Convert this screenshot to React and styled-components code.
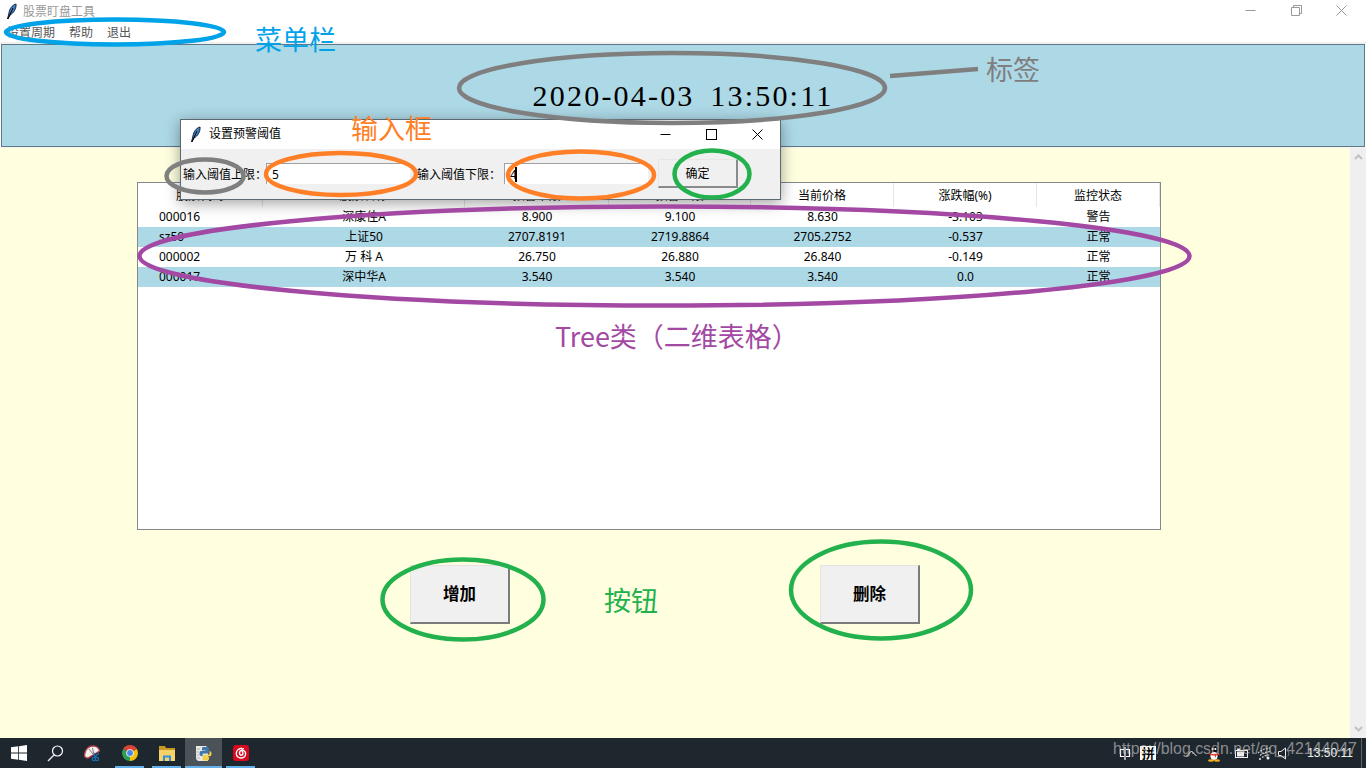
import styled, { createGlobalStyle } from 'styled-components';

const UI_FONT = `"Noto Sans", "Noto Sans CJK SC", sans-serif`;

const GlobalStyle = createGlobalStyle`
  html, body {
    margin: 0;
    padding: 0;
    overflow: hidden;
    background: #fff;
  }
  * {
    box-sizing: border-box;
  }
`;

const Page = styled.div`
  position: relative;
  width: 1366px;
  height: 768px;
  overflow: hidden;
  display: flex;
  flex-direction: column;
  font-family: ${UI_FONT};
  font-size: 12px;
  color: #000;
`;

const TitleBar = styled.div`
  height: 22px;
  flex: none;
  display: flex;
  align-items: center;
  padding: 1px 0 0 6px;
  background: #fff;
  color: ${(p) => (p.$active ? '#000' : '#9a9a9a')};
`;

const TitleText = styled.span`
  margin-left: ${(p) => p.$gap}px;
  line-height: 20px;
`;

const WindowButtons = styled.div`
  margin-left: auto;
  margin-top: ${(p) => p.$lift || 0}px;
  margin-right: ${(p) => p.$inset || 0}px;
  display: flex;
  color: ${(p) => p.$color};
`;

const WindowButton = styled.div`
  width: ${(p) => p.$w}px;
  display: flex;
  justify-content: center;
`;

const MenuBar = styled.div`
  height: 20px;
  flex: none;
  display: flex;
  gap: 14px;
  align-items: center;
  padding-left: 7px;
  background: #fff;
  color: #555;
`;

const MenuGap = styled.div`
  height: 2px;
  flex: none;
  background: #f0f0f0;
`;

const Band = styled.div`
  height: 103px;
  flex: none;
  margin: 0 1px;
  display: flex;
  align-items: center;
  justify-content: center;
  background: #add8e6;
  border: 1px solid #5f7a84;
  font-family: "Liberation Serif", serif;
  font-size: 30px;
  letter-spacing: 2.2px;
  word-spacing: 6px;
`;

const BandEdge = styled.div`
  height: 1px;
  flex: none;
  background: #f4f4f4;
`;

const Main = styled.div`
  flex: 1;
  min-height: 0;
  display: flex;
  background: #ffffe0;
`;

const Content = styled.div`
  flex: 1;
  padding: 34px 0 0 137px;
`;

const Tree = styled.div`
  width: 1024px;
  height: 348px;
  background: #fff;
  border: 1px solid #828790;
`;

const TreeRow = styled.div`
  display: grid;
  grid-template-columns: 125px 202px 144px 142px 143px 143px 1fr;
  height: ${(p) => (p.$head ? 24 : 20)}px;
  align-items: center;
  background: ${(p) => (p.$shaded ? '#add8e6' : '#fff')};
`;

const HeadCell = styled.div`
  height: 100%;
  display: flex;
  align-items: center;
  justify-content: center;
  border-right: 1px solid #e5e5e5;
`;

const Cell = styled.div`
  text-align: ${(p) => (p.$left ? 'left' : 'center')};
  padding-left: ${(p) => (p.$left ? 21 : 0)}px;
  line-height: 20px;
  white-space: nowrap;
`;

const Actions = styled.div`
  display: flex;
  gap: 310px;
  padding: 35px 0 0 273px;
`;

const BigButton = styled.button`
  width: 100px;
  height: 59px;
  padding: 0 0 2px;
  background: #f0f0f0;
  border: 0 solid #e3e3e3;
  border-width: 1px 2px 2px 1px;
  border-right-color: #7c7c7c;
  border-bottom-color: #7c7c7c;
  font-family: "Noto Sans CJK SC", sans-serif;
  font-size: 16.5px;
  font-weight: 700;
  color: #000;
`;

const Scrollbar = styled.div`
  width: 16px;
  flex: none;
  display: flex;
  flex-direction: column;
  justify-content: space-between;
  align-items: center;
  padding: 6px 0;
  background: #efefef;
  color: #c2c2c2;
`;

const Taskbar = styled.div`
  height: 30px;
  flex: none;
  display: flex;
  align-items: stretch;
  background: #1f272e;
  color: #fff;
`;

const TaskCell = styled.div`
  position: relative;
  width: 37px;
  display: flex;
  align-items: center;
  justify-content: center;
  background: ${(p) => (p.$active ? '#4b5258' : 'transparent')};

  &::after {
    content: '';
    position: absolute;
    left: ${(p) => (p.$active ? 0 : 4)}px;
    right: ${(p) => (p.$active ? 0 : 4)}px;
    bottom: 0;
    height: 2px;
    background: ${(p) => (p.$running ? '#63b1ec' : 'transparent')};
  }
`;

const Tray = styled.div`
  margin-left: auto;
  display: flex;
  align-items: center;
  padding-right: 4px;
`;

const TrayItem = styled.div`
  margin-left: ${(p) => p.$gap}px;
  display: flex;
  align-items: center;
  justify-content: center;
`;

const ImeBox = styled.div`
  width: 16px;
  height: 14px;
  display: flex;
  align-items: center;
  justify-content: center;
  background: #fff;
  color: #000;
  font-family: "Noto Sans CJK SC", sans-serif;
  font-size: 13px;
  font-weight: 700;
  line-height: 14px;
`;

const Clock = styled.span`
  font-family: "Liberation Sans", sans-serif;
  font-size: 12px;
  color: #f2f2f2;
`;

const TrayEdge = styled.div`
  width: 1px;
  height: 30px;
  margin-left: 8px;
  background: #5c6267;
`;

const Dialog = styled.div`
  position: absolute;
  left: 180px;
  top: 119px;
  width: 601px;
  height: 81px;
  display: flex;
  flex-direction: column;
  background: #f0f0f0;
  border: 1px solid #5a6a70;
  box-shadow: 0 3px 14px rgba(0, 0, 0, 0.38);
`;

const DialogTitle = styled(TitleBar)`
  height: 29px;
  padding: 0 0 1px 9px;
`;

const DialogBody = styled.div`
  flex: 1;
  display: flex;
  align-items: center;
  padding-left: 2px;
`;

const FieldLabel = styled.div`
  width: ${(p) => p.$w}px;
  flex: none;
  white-space: nowrap;
  margin-left: ${(p) => p.$gap || 0}px;
`;

const Entry = styled.div`
  width: 144px;
  height: 21px;
  flex: none;
  margin-top: -1px;
  padding-left: 5px;
  display: flex;
  align-items: center;
  background: #fff;
  border-top: 1px solid #a0a0a0;
  border-left: 1px solid #a0a0a0;
  font-size: 12px;
`;

const Caret = styled.span`
  width: 2px;
  height: 15px;
  margin-left: -2px;
  background: #000;
`;

const ConfirmButton = styled.button`
  width: 80px;
  height: 29px;
  flex: none;
  margin: -2px 0 0 10px;
  padding: 0;
  background: #f0f0f0;
  border: 0 solid #e6e6e6;
  border-width: 1px 2px 2px 1px;
  border-right-color: #8a8a8a;
  border-bottom-color: #8a8a8a;
  font-family: "Noto Sans CJK SC", sans-serif;
  font-size: 12px;
  color: #000;
`;

const Markup = styled.svg`
  position: absolute;
  left: 0;
  top: 0;
  pointer-events: none;
`;

const Note = styled.div`
  position: absolute;
  left: ${(p) => p.$x}px;
  top: ${(p) => p.$y}px;
  color: ${(p) => p.$color};
  font-family: "Noto Sans CJK SC", sans-serif;
  font-size: 27px;
  font-weight: 400;
  line-height: 36px;
  white-space: nowrap;
`;

const Watermark = styled.div`
  position: absolute;
  left: 1113px;
  top: 738px;
  color: rgba(205, 205, 205, 0.62);
  font-family: "Liberation Sans", sans-serif;
  font-size: 15.9px;
  line-height: 22px;
  white-space: nowrap;
`;

const Feather = () => (
  <svg width="11" height="17" viewBox="0 0 11 17">
    <path d="M1.5 16 L3 10 C3.5 6 6 2 10 1 C10.5 5 8 10 4 12 Z" fill="#3f7fc4" stroke="#10243c" strokeWidth="1" />
    <path d="M2 16 L7 5" stroke="#000" strokeWidth="1" fill="none" />
  </svg>
);

const Minimize = () => (
  <svg width="11" height="11" viewBox="0 0 11 11">
    <path d="M0.5 5.5 H10.5" stroke="currentColor" fill="none" />
  </svg>
);

const Maximize = () => (
  <svg width="11" height="11" viewBox="0 0 11 11">
    <rect x="0.5" y="0.5" width="10" height="10" stroke="currentColor" fill="none" />
  </svg>
);

const Restore = () => (
  <svg width="11" height="11" viewBox="0 0 11 11">
    <path d="M2.5 2.5 V0.5 H10.5 V8.5 H8.5 M0.5 2.5 H8.5 V10.5 H0.5 Z" stroke="currentColor" fill="none" />
  </svg>
);

const Close = () => (
  <svg width="11" height="11" viewBox="0 0 11 11">
    <path d="M0.5 0.5 L10.5 10.5 M10.5 0.5 L0.5 10.5" stroke="currentColor" fill="none" />
  </svg>
);

const Chevron = ({ down }) => (
  <svg width="9" height="6" viewBox="0 0 9 6">
    <path d={down ? 'M1 1 L4.5 4.5 L8 1' : 'M1 5 L4.5 1.5 L8 5'} stroke="currentColor" strokeWidth="2" fill="none" />
  </svg>
);

const WinLogo = () => (
  <svg width="16" height="16" viewBox="0 0 16 16">
    <path d="M0 2.3 L7.2 1.3 V7.6 H0 Z M8 1.2 L16 0 V7.6 H8 Z M0 8.4 H7.2 V14.7 L0 13.7 Z M8 8.4 H16 V16 L8 14.8 Z" fill="#fff" />
  </svg>
);

const SearchIcon = () => (
  <svg width="17" height="17" viewBox="0 0 17 17">
    <circle cx="10.5" cy="6" r="5" fill="none" stroke="#fff" strokeWidth="1.2" />
    <path d="M7 10 L1 16" stroke="#e8e8e8" strokeWidth="1.4" />
  </svg>
);

const GaugeIcon = () => (
  <svg width="17" height="17" viewBox="0 0 17 17">
    <path d="M0.5 10 C1 4 5 1 9 1 C12 1 15 3 15.5 6 L9 10 L4 13 C2 13 0.5 12 0.5 10 Z" fill="#f4f0ee" stroke="#b6434e" strokeWidth="1.3" />
    <path d="M5 4 L9 9 M8.5 3 L9.5 8" stroke="#5a6069" strokeWidth="0.8" />
    <path d="M10 8 L11 13 M15 8 L11 12" stroke="#1570b8" strokeWidth="1.3" fill="none" />
    <circle cx="9.8" cy="14" r="1.6" fill="none" stroke="#1570b8" strokeWidth="1.2" />
    <circle cx="13" cy="14" r="1.6" fill="none" stroke="#1570b8" strokeWidth="1.2" />
  </svg>
);

const ChromeIcon = () => (
  <svg width="16" height="16" viewBox="0 0 16 16">
    <path d="M8 8 L1.1 4 A8 8 0 0 1 14.9 4 Z" fill="#db4437" />
    <path d="M8 8 L14.9 4 A8 8 0 0 1 8 16 Z" fill="#f4c20d" />
    <path d="M8 8 L8 16 A8 8 0 0 1 1.1 4 Z" fill="#2f9e52" />
    <circle cx="8" cy="8" r="3.8" fill="#f4f4f4" />
    <circle cx="8" cy="8" r="2.9" fill="#4a86e8" />
  </svg>
);

const FolderIcon = () => (
  <svg width="16" height="15" viewBox="0 0 16 15">
    <path d="M0 0 H6 L7 2 H16 V5 H0 Z" fill="#c99a22" />
    <path d="M0 4 H16 V15 H0 Z" fill="#f7d26a" />
    <path d="M4 15 V9.5 H12 V15 H10 V11.5 H6 V15 Z" fill="#2f8fdc" />
  </svg>
);

const PythonIcon = () => (
  <svg width="17" height="17" viewBox="0 0 17 17">
    <path d="M1 1 H11 L13 3 V16 H3 L1 14 Z" fill="#e8e8e6" />
    <path d="M1.5 4 H5 M1.5 7 H4 M1.5 10 H4 M1.5 13 H5" stroke="#b4b4b4" />
    <path d="M8 2 H12 C13.5 2 14 3 14 4 V7 C14 8 13 8.5 12 8.5 H9 C8 8.5 7.5 9 7.5 10 V11 H6 C5 11 4.5 10 4.5 8.5 C4.5 7 5 6 6 6 H10.5 V5.5 H7 V3.5 C7 2.5 7.5 2 8 2 Z" fill="#3f77a8" />
    <path d="M14.7 6 C15.7 6 16.5 7 16.5 8.5 C16.5 10 16 11.2 15 11.2 H10.5 V11.8 H14 V14 C14 15 13 15.6 11.5 15.6 H9.5 C8.2 15.6 7.7 15 7.7 14 V11.5 C7.7 10.4 8.5 9.8 9.5 9.8 H12.5 C13.6 9.8 14.5 9.2 14.5 8 Z" fill="#f0cf45" />
  </svg>
);

const NeteaseIcon = () => (
  <svg width="16" height="16" viewBox="0 0 16 16">
    <rect width="16" height="16" rx="3" fill="#d8091f" />
    <path d="M9 3.2 C5.5 3.4 3.3 5.8 3.3 8.6 C3.3 11.2 5.4 13 7.9 13 C10.4 13 12.6 11.4 12.6 8.8 C12.6 6.8 11 5.4 9.3 5.4 C7.7 5.4 6.5 6.6 6.5 8.1 C6.5 9.3 7.3 10.2 8.3 10.2 C9.3 10.2 10 9.5 10 8.5 L9.2 5.3 C9 4.3 9.7 3.4 11 3.8" stroke="#fff" strokeWidth="1.4" fill="none" />
  </svg>
);

const ImeIcon = () => (
  <svg width="12" height="13" viewBox="0 0 12 13">
    <path d="M5 2.5 H1.5 V9.5 H5 M7 2.5 H10.5 V9.5 H7 M6 0 V13" stroke="#fff" strokeWidth="1.2" fill="none" />
  </svg>
);

const CaretUp = () => (
  <svg width="11" height="7" viewBox="0 0 11 7">
    <path d="M0.5 6 L5.5 1 L10.5 6" stroke="#eee" fill="none" />
  </svg>
);

const QQIcon = () => (
  <svg width="14" height="17" viewBox="0 0 14 17">
    <ellipse cx="7" cy="8" rx="5" ry="7.5" fill="#111" />
    <ellipse cx="7" cy="11" rx="3.6" ry="4" fill="#fff" />
    <circle cx="5.6" cy="4" r="1.1" fill="#fff" />
    <circle cx="8.4" cy="4" r="1.1" fill="#fff" />
    <path d="M2 8 C5 9.5 9 9.5 12 8 L12.5 10 L9 10.5 L9 13 L7.5 10.5 C5 10.5 3 10 2 9.5 Z" fill="#e0342f" />
    <ellipse cx="4" cy="15.5" rx="3" ry="1.3" fill="#f2b31b" />
    <ellipse cx="10" cy="15.5" rx="3" ry="1.3" fill="#f2b31b" />
  </svg>
);

const BatteryIcon = () => (
  <svg width="13" height="10" viewBox="0 0 13 10">
    <rect x="0.5" y="2.5" width="12" height="7" fill="none" stroke="#eee" />
    <rect x="2" y="3.5" width="7" height="5" fill="#eee" />
    <rect x="2" y="0.5" width="3" height="1.5" fill="#eee" />
  </svg>
);

const WifiIcon = () => (
  <svg width="14" height="13" viewBox="0 0 14 13">
    <path d="M1 6 C4 3 8 1.5 13 1 M3 8.5 C5.5 6.5 8 5.3 13 4.5 M5 10.5 C7 9 9 8 13 8" stroke="#ccc" strokeWidth="1.2" strokeDasharray="2 1" fill="none" />
    <circle cx="11" cy="11" r="1.5" fill="#eee" />
    <circle cx="3" cy="12" r="1" fill="#eee" />
  </svg>
);

const VolumeIcon = () => (
  <svg width="13" height="13" viewBox="0 0 13 13">
    <path d="M0.5 4.5 H3 L7.5 1 V12 L3 8.5 H0.5 Z" stroke="#eee" fill="none" />
    <path d="M10 4 L11 6.5 L10 9" stroke="#777" fill="none" />
  </svg>
);

const rows = [
  ['000016', '深康佳A', '8.900', '9.100', '8.630', '-3.103', '警告'],
  ['sz50', '上证50', '2707.8191', '2719.8864', '2705.2752', '-0.537', '正常'],
  ['000002', '万 科 A', '26.750', '26.880', '26.840', '-0.149', '正常'],
  ['000017', '深中华A', '3.540', '3.540', '3.540', '0.0', '正常'],
];

const columns = ['股票代码', '股票名称', '预警下限', '预警上限', '当前价格', '涨跌幅(%)', '监控状态'];

const rings = [
  { cx: 115, cy: 32, rx: 109, ry: 12.5, color: '#00a2e8' },
  { cx: 672, cy: 88, rx: 213, ry: 35, color: '#7f7f7f' },
  { cx: 205, cy: 176, rx: 38.5, ry: 16.5, color: '#7f7f7f' },
  { cx: 341, cy: 174, rx: 75, ry: 21, color: '#ff7f27' },
  { cx: 581, cy: 175, rx: 73, ry: 23.5, color: '#ff7f27' },
  { cx: 712, cy: 174, rx: 37.5, ry: 23.5, color: '#22b14c' },
  { cx: 664.5, cy: 256, rx: 525, ry: 49.5, color: '#a349a4' },
  { cx: 463, cy: 599.5, rx: 80.5, ry: 40, color: '#22b14c' },
  { cx: 881, cy: 590, rx: 90, ry: 48.5, color: '#22b14c' },
];

export default function App() {
  return (
    <Page>
      <GlobalStyle />

      <TitleBar>
        <Feather />
        <TitleText $gap={6}>股票盯盘工具</TitleText>
        <WindowButtons $color="#999" $lift={-3} $inset={3}>
          <WindowButton $w={45}><Minimize /></WindowButton>
          <WindowButton $w={46}><Restore /></WindowButton>
          <WindowButton $w={44}><Close /></WindowButton>
        </WindowButtons>
      </TitleBar>
      <MenuBar>
        <span>设置周期</span>
        <span>帮助</span>
        <span>退出</span>
      </MenuBar>
      <MenuGap />
      <Band>2020-04-03 13:50:11</Band>
      <BandEdge />

      <Main>
        <Content>
          <Tree>
            <TreeRow $head>
              {columns.map((c) => (
                <HeadCell key={c}>{c}</HeadCell>
              ))}
            </TreeRow>
            {rows.map((r, i) => (
              <TreeRow key={r[0]} $shaded={i % 2 === 1}>
                {r.map((v, j) => (
                  <Cell key={j} $left={j === 0}>{v}</Cell>
                ))}
              </TreeRow>
            ))}
          </Tree>
          <Actions>
            <BigButton>增加</BigButton>
            <BigButton>删除</BigButton>
          </Actions>
        </Content>
        <Scrollbar>
          <Chevron />
          <Chevron down />
        </Scrollbar>
      </Main>

      <Taskbar>
        <TaskCell><WinLogo /></TaskCell>
        <TaskCell><SearchIcon /></TaskCell>
        <TaskCell><GaugeIcon /></TaskCell>
        <TaskCell $running><ChromeIcon /></TaskCell>
        <TaskCell $running><FolderIcon /></TaskCell>
        <TaskCell $running $active><PythonIcon /></TaskCell>
        <TaskCell $running><NeteaseIcon /></TaskCell>
        <Tray>
          <TrayItem $gap={0}><ImeIcon /></TrayItem>
          <TrayItem $gap={9}><ImeBox>拼</ImeBox></TrayItem>
          <TrayItem $gap={30}><CaretUp /></TrayItem>
          <TrayItem $gap={10}><QQIcon /></TrayItem>
          <TrayItem $gap={14}><BatteryIcon /></TrayItem>
          <TrayItem $gap={9}><WifiIcon /></TrayItem>
          <TrayItem $gap={7}><VolumeIcon /></TrayItem>
          <TrayItem $gap={16}><Clock>13:50:11</Clock></TrayItem>
          <TrayEdge />
        </Tray>
      </Taskbar>

      <Dialog>
        <DialogTitle $active>
          <Feather />
          <TitleText $gap={8}>设置预警阈值</TitleText>
          <WindowButtons $color="#000">
            <WindowButton $w={46}><Minimize /></WindowButton>
            <WindowButton $w={46}><Maximize /></WindowButton>
            <WindowButton $w={46}><Close /></WindowButton>
          </WindowButtons>
        </DialogTitle>
        <DialogBody>
          <FieldLabel $w={83}>输入阈值上限：</FieldLabel>
          <Entry>5</Entry>
          <FieldLabel $w={87} $gap={7}>输入阈值下限：</FieldLabel>
          <Entry>4<Caret /></Entry>
          <ConfirmButton>确定</ConfirmButton>
        </DialogBody>
      </Dialog>

      <Markup width="1366" height="768" viewBox="0 0 1366 768">
        {rings.map((r) => (
          <ellipse
            key={`${r.cx}-${r.cy}`}
            cx={r.cx}
            cy={r.cy}
            rx={r.rx}
            ry={r.ry}
            fill="none"
            stroke={r.color}
            strokeWidth="4.5"
          />
        ))}
        <path d="M890 76 L978 69" stroke="#7f7f7f" strokeWidth="4.5" />
      </Markup>

      <Note $x={255} $y={21} $color="#00a2e8">菜单栏</Note>
      <Note $x={986} $y={51} $color="#7f7f7f">标签</Note>
      <Note $x={351} $y={110} $color="#ff7f27">输入框</Note>
      <Note $x={555} $y={318} $color="#a349a4">Tree类（二维表格）</Note>
      <Note $x={604} $y={582} $color="#22b14c">按钮</Note>

      <Watermark>https://blog.csdn.net/qq_42144047</Watermark>
    </Page>
  );
}
